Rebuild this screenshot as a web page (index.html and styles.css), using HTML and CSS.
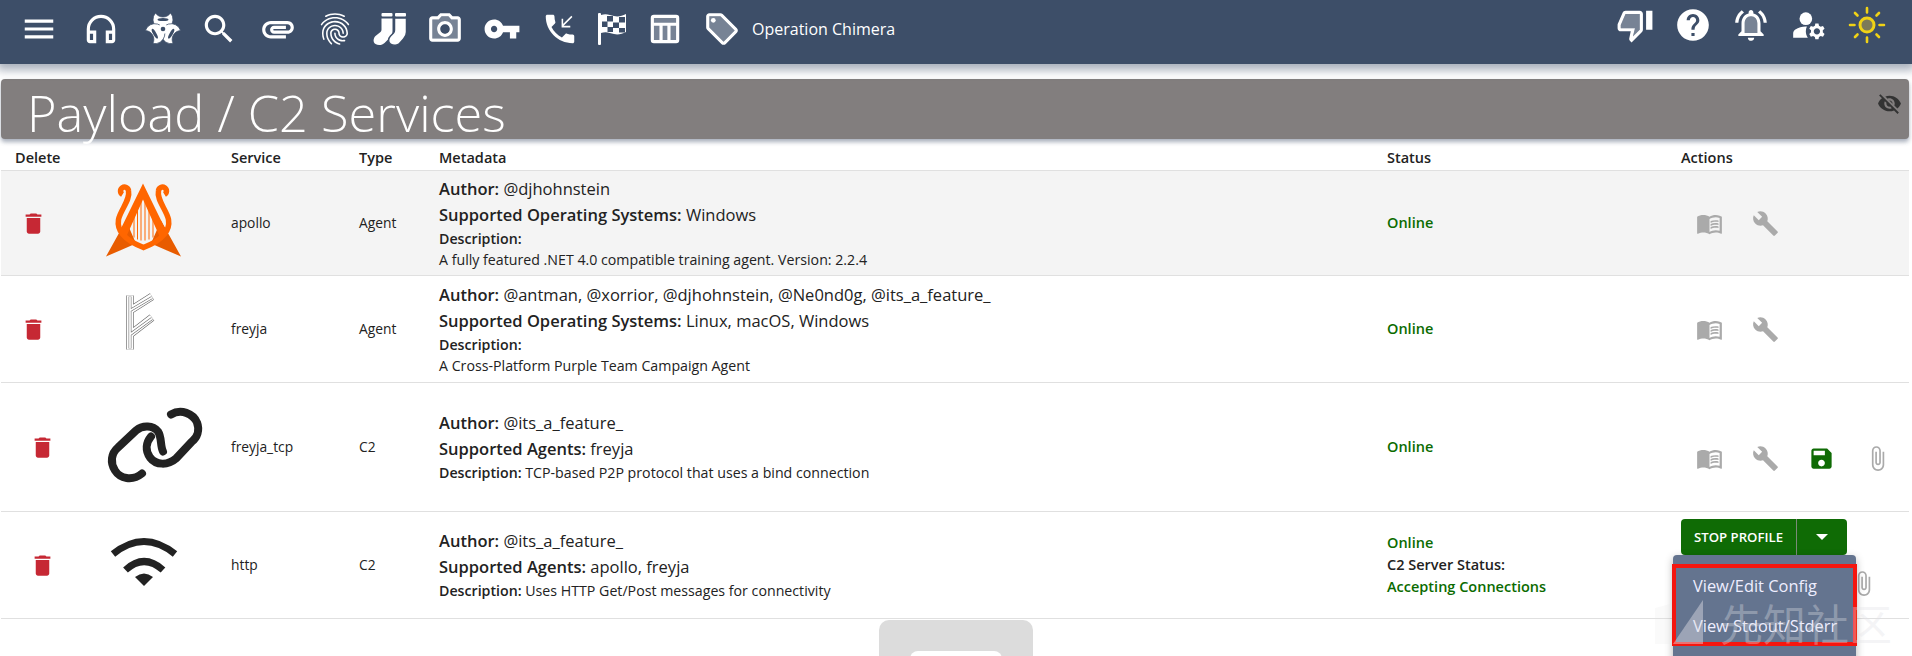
FILE: index.html
```html
<!DOCTYPE html>
<html lang="en">
<head>
    <meta charset="UTF-8">
    <title>Payload / C2 Services</title>
    <link rel="stylesheet" href="styles.css">
</head>
<body>
    <!-- Top bar -->
    <header class="appbar">
        <nav class="appbar-left">
            <svg class="nav-icon" viewBox="0 0 24 24"><path d="M3 18h18v-2H3v2zm0-5h18v-2H3v2zm0-7v2h18V6H3z"/></svg>
            <svg class="nav-icon" viewBox="0 0 24 24"><path d="M12 3a9 9 0 0 0-9 9v7c0 1.1.9 2 2 2h4v-8H5v-1a7 7 0 0 1 14 0v1h-4v8h4c1.1 0 2-.9 2-2v-7a9 9 0 0 0-9-9zM7 15v4H5v-4h2zm12 4h-2v-4h2v4z"/></svg>
            <svg class="nav-icon" viewBox="-19 -19 38 38">
                <g stroke="#3d4e68" stroke-width=".7">
                    <path d="M-7.5-16A10 10 0 1 0 7.5-16A9 9 0 0 1-7.5-16z"/>
                    <path d="M-7.5-16A10 10 0 1 0 7.5-16A9 9 0 0 1-7.5-16z" transform="rotate(120)"/>
                    <path d="M-7.5-16A10 10 0 1 0 7.5-16A9 9 0 0 1-7.5-16z" transform="rotate(240)"/>
                </g>
                <g fill="#3d4e68">
                    <ellipse cy="-9.5" rx="5.5" ry="1.6"/>
                    <ellipse cy="-9.5" rx="5.5" ry="1.6" transform="rotate(120)"/>
                    <ellipse cy="-9.5" rx="5.5" ry="1.6" transform="rotate(240)"/>
                </g>
                <circle r="5"/>
                <circle r="2.3" fill="#3d4e68"/>
            </svg>
            <svg class="nav-icon" viewBox="0 0 24 24"><path d="M15.5 14h-.79l-.28-.27C15.41 12.59 16 11.11 16 9.5 16 5.91 13.09 3 9.5 3S3 5.91 3 9.5 5.91 16 9.5 16c1.61 0 3.09-.59 4.23-1.57l.27.28v.79l5 4.99L20.49 19l-4.99-5zm-6 0C7.01 14 5 11.99 5 9.5S7.01 5 9.5 5 14 7.01 14 9.5 11.99 14 9.5 14z"/></svg>
            <svg class="nav-icon" viewBox="0 0 24 24"><path d="M2 12.5C2 9.46 4.46 7 7.5 7H18c2.21 0 4 1.79 4 4s-1.79 4-4 4H9.5C8.12 15 7 13.88 7 12.5S8.12 10 9.5 10H17v2H9.41c-.55 0-.55 1 0 1H18c1.1 0 2-.9 2-2s-.9-2-2-2H7.5C5.57 9 4 10.57 4 12.5S5.57 16 7.5 16H17v2H7.5C4.46 18 2 15.54 2 12.5z"/></svg>
            <svg class="nav-icon" viewBox="0 0 24 24"><path d="M17.81 4.47c-.08 0-.16-.02-.23-.06C15.66 3.42 14 3 12.01 3c-1.98 0-3.86.47-5.57 1.41-.24.13-.54.04-.68-.2-.13-.24-.04-.55.2-.68C7.82 2.52 9.86 2 12.01 2c2.13 0 3.99.47 6.03 1.52.25.13.34.43.21.67-.09.18-.26.28-.44.28zM3.5 9.72c-.1 0-.2-.03-.29-.09-.23-.16-.28-.47-.12-.7.99-1.4 2.25-2.5 3.75-3.27C9.98 4.04 14 4.03 17.15 5.65c1.5.77 2.76 1.86 3.75 3.25.16.22.11.54-.12.7-.23.16-.54.11-.7-.12-.9-1.26-2.04-2.25-3.39-2.94-2.87-1.47-6.54-1.47-9.4.01-1.36.7-2.5 1.7-3.4 2.96-.08.14-.23.21-.39.21zm6.25 12.07c-.13 0-.26-.05-.35-.15-.87-.87-1.34-1.43-2.01-2.64-.69-1.23-1.05-2.73-1.05-4.34 0-2.97 2.54-5.39 5.66-5.39s5.66 2.42 5.66 5.39c0 .28-.22.5-.5.5s-.5-.22-.5-.5c0-2.42-2.09-4.39-4.66-4.39-2.57 0-4.66 1.97-4.66 4.39 0 1.44.32 2.77.93 3.85.64 1.15 1.08 1.64 1.85 2.42.19.2.19.51 0 .71-.11.1-.24.15-.37.15zm7.17-1.85c-1.19 0-2.24-.3-3.1-.89-1.49-1.01-2.38-2.65-2.38-4.39 0-.28.22-.5.5-.5s.5.22.5.5c0 1.41.72 2.74 1.94 3.56.71.48 1.54.71 2.54.71.24 0 .64-.03 1.04-.1.27-.05.53.13.58.41.05.27-.13.53-.41.58-.57.11-1.07.12-1.21.12zM14.91 22c-.04 0-.09-.01-.13-.02-1.59-.44-2.63-1.03-3.72-2.1-1.4-1.39-2.17-3.24-2.17-5.22 0-1.62 1.38-2.94 3.08-2.94 1.7 0 3.08 1.32 3.08 2.94 0 1.07.93 1.94 2.08 1.94s2.08-.87 2.08-1.94c0-3.77-3.25-6.83-7.25-6.83-2.84 0-5.44 1.58-6.61 4.03-.39.81-.59 1.76-.59 2.8 0 .78.07 2.01.67 3.61.1.26-.03.55-.29.64-.26.1-.55-.04-.64-.29-.49-1.31-.73-2.61-.73-3.96 0-1.2.23-2.29.68-3.24 1.33-2.79 4.28-4.6 7.51-4.6 4.55 0 8.25 3.51 8.25 7.83 0 1.62-1.38 2.94-3.08 2.94s-3.08-1.32-3.08-2.94c0-1.07-.93-1.94-2.08-1.94s-2.08.87-2.08 1.94c0 1.71.66 3.31 1.87 4.51.95.94 1.86 1.46 3.27 1.85.27.07.42.35.35.61-.05.23-.26.38-.47.38z"/></svg>
            <svg class="nav-icon" viewBox="-2.5 -3 38 38">
                <rect x="8" y="0" width="11" height="3.5" rx="1"/>
                <rect x="21.5" y="0" width="11" height="3.5" rx="1"/>
                <path d="M8 5.5h11V18c0 3-1 5-3 7l-5 5c-2 2-6 3-9 1-3-2-2-6 0-8l5-4c1-1 1-2 1-3z"/>
                <path stroke="#3d4e68" stroke-width="1.5" d="M21 5h12v14c0 3-1 5-3 7l-4 4.5c-2 2-6 2.500-9 .5-3-2-2-6 0-8l3-3c1-1 1-2 1-3z"/>
            </svg>
            <svg class="nav-icon" viewBox="0 0 24 24"><path opacity=".3" d="M14.12 4H9.88L8.05 6H4v12h16V6h-4.05zM12 17c-2.76 0-5-2.24-5-5s2.24-5 5-5 5 2.24 5 5-2.24 5-5 5z"/><path d="M20 4h-3.17L15 2H9L7.17 4H4c-1.1 0-2 .9-2 2v12c0 1.1.9 2 2 2h16c1.1 0 2-.9 2-2V6c0-1.1-.9-2-2-2zm0 14H4V6h4.05l1.83-2h4.24l1.83 2H20v12z"/><path d="M12 7c-2.76 0-5 2.24-5 5s2.24 5 5 5 5-2.24 5-5-2.24-5-5-5zm0 8c-1.65 0-3-1.35-3-3s1.35-3 3-3 3 1.35 3 3-1.35 3-3 3z"/></svg>
            <svg class="nav-icon" viewBox="0 0 24 24"><path d="M12.65 10C11.83 7.67 9.61 6 7 6c-3.31 0-6 2.69-6 6s2.69 6 6 6c2.61 0 4.83-1.67 5.65-4H17v4h4v-4h2v-4H12.65zM7 14c-1.1 0-2-.9-2-2s.9-2 2-2 2 .9 2 2-.9 2-2 2z"/></svg>
            <svg class="nav-icon" viewBox="0 0 24 24"><path d="M20 15.5c-1.25 0-2.45-.2-3.57-.57-.35-.11-.74-.03-1.02.24l-2.2 2.2c-2.83-1.44-5.15-3.75-6.59-6.59l2.2-2.21c.28-.26.36-.65.25-1C8.7 6.45 8.5 5.25 8.5 4c0-.55-.45-1-1-1H4c-.55 0-1 .45-1 1 0 9.39 7.61 17 17 17 .55 0 1-.45 1-1v-3.5c0-.55-.45-1-1-1z"/><path d="M19.5 4L13.5 10M13.5 5.5V10.5H18.5" fill="none" stroke="#fff" stroke-width="1"/></svg>
            <svg class="nav-icon" viewBox="-5 -3 38 38">
                <rect x="0" y="0" width="3" height="32" rx="1"/>
                <path d="M3 2C8 0 12 2 16 3S24 3 28 1V19C24 21 20 22 16 21S8 18 3 20z"/>
                <g fill="#3d4e68">
                    <rect x="9" y="3" width="6" height="5.5"/>
                    <rect x="21" y="4" width="6" height="5.5"/>
                    <rect x="4" y="8.5" width="5.5" height="5.5"/>
                    <rect x="15" y="9.5" width="6" height="5.5"/>
                    <rect x="9.5" y="14" width="5.5" height="5"/>
                    <rect x="21" y="15" width="6" height="4.5"/>
                </g>
            </svg>
            <svg class="nav-icon" viewBox="0 0 24 24">
                <path opacity=".3" d="M4 4h16v16H4z"/>
                <path d="M5 3h14a2 2 0 0 1 2 2v14a2 2 0 0 1-2 2H5a2 2 0 0 1-2-2V5a2 2 0 0 1 2-2zm0 2v3h14V5H5zm0 5v9h3.5v-9H5zm5.5 0v9h3v-9h-3zm5 0v9H19v-9h-3.5z"/>
            </svg>
            <svg class="nav-icon" viewBox="0 0 24 24"><path opacity=".3" d="M11 4H4v7l9 9.01L20 13z"/><path d="M21.41 11.58l-9-9C12.05 2.22 11.55 2 11 2H4c-1.1 0-2 .9-2 2v7c0 .55.22 1.05.59 1.42l9 9c.36.36.86.58 1.41.58s1.05-.22 1.41-.59l7-7c.37-.36.59-.86.59-1.41s-.23-1.06-.59-1.42zM13 20.01L4 11V4h7v-.01l9 9-7 7.02z"/><circle cx="6.5" cy="6.5" r="1.5"/></svg>
            <span class="op-name">Operation Chimera</span>
        </nav>
        <div class="appbar-right">
            <svg class="nav-icon" viewBox="0 0 24 24"><path opacity=".3" d="M3 12v2h9l-1.34 5.34L15 15V5H6z"/><path d="M15 3H6c-.83 0-1.54.5-1.84 1.22l-3.02 7.05c-.09.23-.14.47-.14.73v2c0 1.1.9 2 2 2h6.31l-.95 4.57-.03.32c0 .41.17.79.44 1.06L9.83 23l6.59-6.59c.36-.36.58-.86.58-1.41V5c0-1.1-.9-2-2-2zm0 12l-4.34 4.34L12 14H3v-2l3-7h9v10zm4-12h4v12h-4z"/></svg>
            <svg class="nav-icon" viewBox="0 0 24 24"><path d="M12 2C6.48 2 2 6.48 2 12s4.48 10 10 10 10-4.48 10-10S17.52 2 12 2zm1 17h-2v-2h2v2zm2.07-7.75l-.9.92C13.45 12.9 13 13.5 13 15h-2v-.5c0-1.1.45-2.1 1.17-2.83l1.24-1.26c.37-.36.59-.86.59-1.41 0-1.1-.9-2-2-2s-2 .9-2 2H8c0-2.21 1.79-4 4-4s4 1.79 4 4c0 .88-.36 1.68-.93 2.25z"/></svg>
            <svg class="nav-icon" viewBox="0 0 24 24"><path opacity=".3" d="M12 6.5c-2.49 0-4 2.02-4 4.5v6h8v-6c0-2.48-1.51-4.5-4-4.5z"/><path d="M7.58 4.08L6.15 2.65C3.75 4.48 2.17 7.3 2.03 10.5h2c.15-2.65 1.51-4.97 3.55-6.42zm12.39 6.42h2c-.15-3.2-1.73-6.02-4.12-7.85l-1.42 1.43c2.02 1.45 3.39 3.77 3.54 6.42zM18 11c0-3.07-1.64-5.64-4.5-6.32V4c0-.83-.67-1.5-1.5-1.5s-1.5.67-1.5 1.5v.68C7.63 5.36 6 7.92 6 11v5l-2 2v1h16v-1l-2-2v-5zm-2 6H8v-6c0-2.48 1.51-4.5 4-4.5s4 2.02 4 4.5v6zm-4 5c.14 0 .27-.01.4-.04.65-.14 1.18-.58 1.44-1.18.1-.24.15-.5.15-.78h-4c.01 1.1.9 2 2.01 2z"/></svg>
            <svg class="nav-icon" viewBox="0 0 24 24"><circle cx="10" cy="8" r="4"/><path d="M10.67 13.02c-.22-.01-.44-.02-.67-.02-2.42 0-4.68.67-6.61 1.82-.88.52-1.39 1.5-1.39 2.53V20h9.26c-.79-1.13-1.26-2.51-1.26-4 0-1.07.25-2.07.67-2.98z"/><path d="M20.75 16c0-.22-.03-.42-.06-.63l1.14-1.01-1-1.73-1.45.49c-.32-.27-.68-.48-1.08-.63L18 11h-2l-.3 1.49c-.4.15-.76.36-1.08.63l-1.45-.49-1 1.73 1.14 1.01c-.03.21-.06.41-.06.63s.03.42.06.63l-1.14 1.01 1 1.73 1.45-.49c.32.27.68.48 1.08.63L16 21h2l.3-1.49c.4-.15.76-.36 1.08-.63l1.45.49 1-1.73-1.14-1.01c.03-.21.06-.41.06-.63zM17 18c-1.1 0-2-.9-2-2s.9-2 2-2 2 .9 2 2-.9 2-2 2z"/></svg>
            <svg class="nav-icon" viewBox="-19 -19 38 38">
                <circle r="7" fill="#7d7a58" stroke="#f0d216" stroke-width="3"/>
                <path d="M0-12.5v-4.5M0 12.5v4.5M-12.5 0h-4.5M12.5 0h4.5M-9.500-9.500l-2.500-2.500M9.500-9.500l2.500-2.500M-9.500 9.500l-2.500 2.500M9.500 9.500l2.500 2.500" fill="none" stroke="#f0d216" stroke-width="2.6" stroke-linecap="round"/>
            </svg>
        </div>
    </header>

    <div class="title-bar">
        <h1>Payload / C2 Services</h1>
        <svg class="hide-icon" viewBox="0 0 24 24"><path d="M12 7c2.76 0 5 2.24 5 5 0 .65-.13 1.26-.36 1.83l2.92 2.92c1.51-1.26 2.7-2.89 3.43-4.75-1.73-4.39-6-7.5-11-7.5-1.4 0-2.74.25-3.98.7l2.16 2.16C10.74 7.13 11.35 7 12 7zM2 4.27l2.28 2.28.46.46C3.08 8.3 1.78 10.02 1 12c1.73 4.39 6 7.5 11 7.5 1.55 0 3.03-.3 4.38-.84l.42.42L19.73 22 21 20.73 3.27 3 2 4.27zM7.53 9.8l1.55 1.55c-.05.21-.08.43-.08.65 0 1.66 1.34 3 3 3 .22 0 .44-.03.65-.08l1.55 1.55c-.67.33-1.41.53-2.2.53-2.76 0-5-2.24-5-5 0-.79.2-1.53.53-2.2zm4.31-.78l3.15 3.15.02-.16c0-1.66-1.34-3-3-3l-.17.01z"/></svg>
    </div>

    <!-- Services -->
    <table class="services">
        <colgroup>
            <col class="col-delete"><col class="col-logo"><col class="col-service"><col class="col-type"><col class="col-meta"><col class="col-status"><col class="col-actions">
        </colgroup>
        <thead>
            <tr>
                <th>Delete</th>
                <th></th>
                <th>Service</th>
                <th>Type</th>
                <th>Metadata</th>
                <th>Status</th>
                <th>Actions</th>
            </tr>
        </thead>
        <tbody>
            <tr class="row-agent shaded">
                <td class="delete"><svg class="trash" viewBox="0 0 24 24"><path d="M6 19c0 1.1.9 2 2 2h8c1.1 0 2-.9 2-2V7H6v12zM19 4h-3.5l-1-1h-5l-1 1H5v2h14V4z"/></svg></td>
                <td class="logo">
                    <svg viewBox="93 173.5 100 100">
                        <path fill="#e85c00" d="M106 257L126 221 136 244 120 251zM181 257L161 221 151 244 167 251z"/>
                        <path fill="#ff6600" d="M143 184L119 233 125 240 143 200 161 240 167 233z"/>
                        <path d="M134 212V238M137.5 206V240M141 200V241M145 200V241M149 206V240M153 212V238" stroke="#ff6600" stroke-width="1" fill="none"/>
                        <path d="M122.5 195a4 4 0 1 1 6-4c2 10-8 19-10 29-2 12 7 21 25 28 18-7 27-16 25-28-2-10-12-19-10-29a4 4 0 1 1 6 4" stroke="#ff6600" stroke-width="5.5" fill="none"/>
                    </svg>
                </td>
                <td class="plain">apollo</td>
                <td class="plain">Agent</td>
                <td class="meta">
                    <p class="meta-big"><b>Author:</b> @djhohnstein</p>
                    <p class="meta-big"><b>Supported Operating Systems:</b> Windows</p>
                    <p class="meta-small"><b>Description:</b></p>
                    <p class="meta-small">A fully featured .NET 4.0 compatible training agent. Version: 2.2.4</p>
                </td>
                <td class="plain online">Online</td>
                <td>
                    <div class="actions">
                        <span class="action"><svg viewBox="0 0 24 24"><path d="M21 5c-1.11-.35-2.33-.5-3.5-.5-1.95 0-4.05.4-5.5 1.5-1.45-1.1-3.55-1.5-5.5-1.5S2.45 4.9 1 6v14.65c0 .25.25.5.5.5.1 0 .15-.05.25-.05C3.1 20.45 5.05 20 6.5 20c1.95 0 4.05.4 5.5 1.5 1.35-.85 3.8-1.5 5.5-1.5 1.65 0 3.35.3 4.75 1.05.1.05.15.05.25.05.25 0 .5-.25.5-.5V6c-.6-.45-1.25-.75-2-1zm0 13.5c-1.1-.35-2.3-.5-3.5-.5-1.7 0-4.15.65-5.5 1.5V8c1.35-.85 3.8-1.5 5.5-1.5 1.2 0 2.4.15 3.5.5v11.5z"/><path d="M17.5 10.5c.88 0 1.73.09 2.5.26V9.24c-.79-.15-1.64-.24-2.5-.24-1.7 0-3.24.29-4.5.83v1.66c1.13-.64 2.7-.99 4.5-.99zM13 12.49v1.66c1.13-.64 2.7-.99 4.5-.99.88 0 1.73.09 2.5.26V11.9c-.79-.15-1.64-.24-2.5-.24-1.7 0-3.24.3-4.5.83zM17.5 14.33c-1.7 0-3.24.29-4.5.83v1.66c1.13-.64 2.7-.99 4.5-.99.88 0 1.73.09 2.5.26v-1.52c-.79-.16-1.64-.24-2.5-.24z"/></svg></span>
                        <span class="action"><svg viewBox="0 0 24 24"><path d="M22.7 19l-9.1-9.1c.9-2.3.4-5-1.5-6.9-2-2-5-2.4-7.4-1.3L9 6 6 9 1.6 4.7C.4 7.1.9 10.1 2.9 12.1c1.9 1.9 4.6 2.4 6.9 1.5l9.1 9.1c.4.4 1 .4 1.4 0l2.3-2.3c.5-.4.5-1.1.1-1.4z"/></svg></span>
                    </div>
                </td>
            </tr>
            <tr class="row-agent">
                <td class="delete"><svg class="trash" viewBox="0 0 24 24"><path d="M6 19c0 1.1.9 2 2 2h8c1.1 0 2-.9 2-2V7H6v12zM19 4h-3.5l-1-1h-5l-1 1H5v2h14V4z"/></svg></td>
                <td class="logo">
                    <svg viewBox="93 279.5 100 100">
                        <g fill="none">
                            <path d="M130 296V350M130 311L152 297M130 335L152 318" stroke="#666" stroke-width="7.5"/>
                            <path d="M130 296V350M130 311L152 297M130 335L152 318" stroke="#fff" stroke-width="6.3"/>
                            <path d="M130 297V349M130 311L152 298M130 335L152 319" stroke="#666" stroke-width="2.8"/>
                            <path d="M130 297V349M130 311L152 298M130 335L152 319" stroke="#fff" stroke-width="1.7"/>
                        </g>
                    </svg>
                </td>
                <td class="plain">freyja</td>
                <td class="plain">Agent</td>
                <td class="meta">
                    <p class="meta-big"><b>Author:</b> @antman, @xorrior, @djhohnstein, @Ne0nd0g, @its_a_feature_</p>
                    <p class="meta-big"><b>Supported Operating Systems:</b> Linux, macOS, Windows</p>
                    <p class="meta-small"><b>Description:</b></p>
                    <p class="meta-small">A Cross-Platform Purple Team Campaign Agent</p>
                </td>
                <td class="plain online">Online</td>
                <td>
                    <div class="actions">
                        <span class="action"><svg viewBox="0 0 24 24"><path d="M21 5c-1.11-.35-2.33-.5-3.5-.5-1.95 0-4.05.4-5.5 1.5-1.45-1.1-3.55-1.5-5.5-1.5S2.45 4.9 1 6v14.65c0 .25.25.5.5.5.1 0 .15-.05.25-.05C3.1 20.45 5.05 20 6.5 20c1.95 0 4.05.4 5.5 1.5 1.35-.85 3.8-1.5 5.5-1.5 1.65 0 3.35.3 4.75 1.05.1.05.15.05.25.05.25 0 .5-.25.5-.5V6c-.6-.45-1.25-.75-2-1zm0 13.5c-1.1-.35-2.3-.5-3.5-.5-1.7 0-4.15.65-5.5 1.5V8c1.35-.85 3.8-1.5 5.5-1.5 1.2 0 2.4.15 3.5.5v11.5z"/><path d="M17.5 10.5c.88 0 1.73.09 2.5.26V9.24c-.79-.15-1.64-.24-2.5-.24-1.7 0-3.24.29-4.5.83v1.66c1.13-.64 2.7-.99 4.5-.99zM13 12.49v1.66c1.13-.64 2.7-.99 4.5-.99.88 0 1.73.09 2.5.26V11.9c-.79-.15-1.64-.24-2.5-.24-1.7 0-3.24.3-4.5.83zM17.5 14.33c-1.7 0-3.24.29-4.5.83v1.66c1.13-.64 2.7-.99 4.5-.99.88 0 1.73.09 2.5.26v-1.52c-.79-.16-1.64-.24-2.5-.24z"/></svg></span>
                        <span class="action"><svg viewBox="0 0 24 24"><path d="M22.7 19l-9.1-9.1c.9-2.3.4-5-1.5-6.9-2-2-5-2.4-7.4-1.3L9 6 6 9 1.6 4.7C.4 7.1.9 10.1 2.9 12.1c1.9 1.9 4.6 2.4 6.9 1.5l9.1 9.1c.4.4 1 .4 1.4 0l2.3-2.3c.5-.4.5-1.1.1-1.4z"/></svg></span>
                    </div>
                </td>
            </tr>
            <tr class="row-tcp">
                <td class="delete delete-c2"><svg class="trash" viewBox="0 0 24 24"><path d="M6 19c0 1.1.9 2 2 2h8c1.1 0 2-.9 2-2V7H6v12zM19 4h-3.5l-1-1h-5l-1 1H5v2h14V4z"/></svg></td>
                <td class="logo">
                    <svg viewBox="93 395.5 100 100">
                        <g fill="none" stroke="#222" stroke-width="8" stroke-linecap="round">
                            <path d="M171 413C181 407 193 412 197 421C200 429 197 436 192 440L176 457C168 464 156 464 150 456C145 449 146 441 151 435"/>
                            <path d="M142 472C132 480 120 477 115 469C110 461 111 452 118 446L136 429C143 423 153 424 158 430C162 436 160 444 163 450"/>
                        </g>
                    </svg>
                </td>
                <td class="plain">freyja_tcp</td>
                <td class="plain">C2</td>
                <td class="meta">
                    <p class="meta-big"><b>Author:</b> @its_a_feature_</p>
                    <p class="meta-big"><b>Supported Agents:</b> freyja</p>
                    <p class="meta-small"><b>Description:</b> TCP-based P2P protocol that uses a bind connection</p>
                </td>
                <td class="plain online">Online</td>
                <td>
                    <div class="actions actions-low">
                        <span class="action"><svg viewBox="0 0 24 24"><path d="M21 5c-1.11-.35-2.33-.5-3.5-.5-1.95 0-4.05.4-5.5 1.5-1.45-1.1-3.55-1.5-5.5-1.5S2.45 4.9 1 6v14.65c0 .25.25.5.5.5.1 0 .15-.05.25-.05C3.1 20.45 5.05 20 6.5 20c1.95 0 4.05.4 5.5 1.5 1.35-.85 3.8-1.5 5.5-1.5 1.65 0 3.35.3 4.75 1.05.1.05.15.05.25.05.25 0 .5-.25.5-.5V6c-.6-.45-1.25-.75-2-1zm0 13.5c-1.1-.35-2.3-.5-3.5-.5-1.7 0-4.15.65-5.5 1.5V8c1.35-.85 3.8-1.5 5.5-1.5 1.2 0 2.4.15 3.5.5v11.5z"/><path d="M17.5 10.5c.88 0 1.73.09 2.5.26V9.24c-.79-.15-1.64-.24-2.5-.24-1.7 0-3.24.29-4.5.83v1.66c1.13-.64 2.7-.99 4.5-.99zM13 12.49v1.66c1.13-.64 2.7-.99 4.5-.99.88 0 1.73.09 2.5.26V11.9c-.79-.15-1.64-.24-2.5-.24-1.7 0-3.24.3-4.5.83zM17.5 14.33c-1.7 0-3.24.29-4.5.83v1.66c1.13-.64 2.7-.99 4.5-.99.88 0 1.73.09 2.5.26v-1.52c-.79-.16-1.64-.24-2.5-.24z"/></svg></span>
                        <span class="action"><svg viewBox="0 0 24 24"><path d="M22.7 19l-9.1-9.1c.9-2.3.4-5-1.5-6.9-2-2-5-2.4-7.4-1.3L9 6 6 9 1.6 4.7C.4 7.1.9 10.1 2.9 12.1c1.9 1.9 4.6 2.4 6.9 1.5l9.1 9.1c.4.4 1 .4 1.4 0l2.3-2.3c.5-.4.5-1.1.1-1.4z"/></svg></span>
                        <span class="action action-save"><svg viewBox="0 0 24 24"><path d="M17 3H5c-1.11 0-2 .9-2 2v14c0 1.1.89 2 2 2h14c1.1 0 2-.9 2-2V7l-4-4zm-5 16c-1.66 0-3-1.34-3-3s1.34-3 3-3 3 1.34 3 3-1.34 3-3 3zm3-10H5V5h10v4z"/></svg></span>
                        <span class="action"><svg viewBox="0 0 24 24"><path d="M16.5 6v11.5c0 2.21-1.79 4-4 4s-4-1.79-4-4V5c0-1.38 1.12-2.5 2.5-2.5s2.5 1.12 2.5 2.5v10.5c0 .55-.45 1-1 1s-1-.45-1-1V6H10v9.5c0 1.38 1.12 2.5 2.5 2.5s2.5-1.12 2.5-2.5V5c0-2.21-1.79-4-4-4S7 2.79 7 5v12.5c0 3.04 2.46 5.5 5.5 5.5s5.5-2.46 5.5-5.5V6h-1.5z"/></svg></span>
                    </div>
                </td>
            </tr>
            <tr class="row-http">
                <td class="delete delete-c2"><svg class="trash" viewBox="0 0 24 24"><path d="M6 19c0 1.1.9 2 2 2h8c1.1 0 2-.9 2-2V7H6v12zM19 4h-3.5l-1-1h-5l-1 1H5v2h14V4z"/></svg></td>
                <td class="logo">
                    <svg viewBox="93 516 100 100">
                        <g fill="none" stroke="#222" stroke-width="7">
                            <path d="M113 555Q144 530 175 555"/>
                            <path d="M125.5 571Q144 554 163 571"/>
                        </g>
                        <path fill="#222" d="M135 578Q144 571 153 578L144 587z"/>
                    </svg>
                </td>
                <td class="plain">http</td>
                <td class="plain">C2</td>
                <td class="meta">
                    <p class="meta-big"><b>Author:</b> @its_a_feature_</p>
                    <p class="meta-big"><b>Supported Agents:</b> apollo, freyja</p>
                    <p class="meta-small"><b>Description:</b> Uses HTTP Get/Post messages for connectivity</p>
                </td>
                <td class="status-stack">
                    <p class="online">Online</p>
                    <p><b>C2 Server Status:</b></p>
                    <p class="online">Accepting Connections</p>
                </td>
                <td class="http-actions">
                    <div class="split-wrap">
                        <div class="split-btn">
                            <span class="split-label">STOP PROFILE</span>
                            <span class="split-arrow"><i class="caret"></i></span>
                        </div>
                        <!-- Opened dropdown of the split button -->
                        <div class="menu">
                            <div class="menu-list">
                                <div class="menu-item">View/Edit Config</div>
                                <div class="menu-item">View Stdout/Stderr</div>
                            </div>
                        </div>
                    </div>
                    <div class="actions actions-end">
                        <span class="action"><svg viewBox="0 0 24 24"><path d="M16.5 6v11.5c0 2.21-1.79 4-4 4s-4-1.79-4-4V5c0-1.38 1.12-2.5 2.5-2.5s2.5 1.12 2.5 2.5v10.5c0 .55-.45 1-1 1s-1-.45-1-1V6H10v9.5c0 1.38 1.12 2.5 2.5 2.5s2.5-1.12 2.5-2.5V5c0-2.21-1.79-4-4-4S7 2.79 7 5v12.5c0 3.04 2.46 5.5 5.5 5.5s5.5-2.46 5.5-5.5V6h-1.5z"/></svg></span>
                    </div>
                </td>
            </tr>
        </tbody>
    </table>

    <div class="placeholder"><div class="placeholder-inner"></div></div>

    <!-- Site watermark -->
    <div class="watermark">
        <svg viewBox="0 0 48 44">
            <path class="mark-dim" d="M0 8L15 4V44H0z"/>
            <path d="M18 44L48 0V44z"/>
        </svg>
        <span>先知社区</span>
    </div>
</body>
</html>
```

FILE: styles.css
```css
body {
    margin: 0;
    height: 656px;
    overflow: hidden;
    position: relative;
    background: #fff;
    font-family: "Open Sans", "Noto Sans", sans-serif;
    color: #222;
}

/* top bar */
.appbar {
    height: 64px;
    display: flex;
    justify-content: space-between;
    background: #3d4e68;
    box-shadow: 0 3px 9px 3px rgba(61, 78, 104, 0.45);
    position: relative;
}
.appbar-left {
    display: flex;
    align-items: center;
    padding: 0 0 6px 20px;
}
.appbar-right {
    display: flex;
    align-items: center;
    gap: 20px;
    padding: 0 26px 14px 0;
}
.nav-icon {
    width: 38px;
    height: 38px;
    flex: none;
    fill: #fff;
}
/* icons in the real bar have uneven widths, so the gaps differ */
.appbar-left .nav-icon { margin-left: 19px; }
.appbar-left .nav-icon:nth-child(1) { margin-left: 0; }
.appbar-left .nav-icon:nth-child(2),
.appbar-left .nav-icon:nth-child(3) { margin-left: 24px; }
.appbar-left .nav-icon:nth-child(4) { margin-left: 18px; }
.appbar-left .nav-icon:nth-child(5) { margin-left: 21px; }
.appbar-left .nav-icon:nth-child(7),
.appbar-left .nav-icon:nth-child(8) { margin-left: 17px; }
.appbar-left .nav-icon:nth-child(10) { margin-left: 20px; }
.appbar-left .nav-icon:nth-child(11) { margin-left: 14px; }
.appbar-left .nav-icon:nth-child(12) { margin-left: 15px; }
.op-name {
    margin-left: 11px;
    color: #fff;
    font-size: 16px;
    line-height: 20px;
}

/* page title */
.title-bar {
    height: 60px;
    margin: 15px 3px 0 1px;
    display: flex;
    justify-content: space-between;
    background: #827e7e;
    border-radius: 4px;
    box-shadow: 0 3px 4px rgba(61, 78, 104, 0.45);
}
.title-bar h1 {
    margin: 0;
    padding-left: 26px;
    font-size: 50.5px;
    font-weight: 300;
    line-height: 68px;
    height: 60px;
    color: #fff;
    white-space: nowrap;
}
.hide-icon {
    width: 25px;
    height: 25px;
    margin: 12px 7px 0 0;
    fill: #333;
}

/* services table */
.services {
    width: 1908px;
    margin: 6px 0 0 1px;
    border-collapse: collapse;
    table-layout: fixed;
    font-size: 13.8px;
}
.col-delete { width: 74px; }
.col-logo { width: 142px; }
.col-service { width: 128px; }
.col-type { width: 80px; }
.col-meta { width: 948px; }
.col-status { width: 294px; }
.col-actions { width: 242px; }

.services th {
    height: 25px;
    padding: 0 0 0 14px;
    text-align: left;
    font-size: 14.5px;
    font-weight: 600;
    border-bottom: 1px solid #e0e0e0;
}
.services td {
    padding: 0 0 0 14px;
    border-bottom: 1px solid #e0e0e0;
}
.row-agent td { height: 106px; }
.row-tcp td { height: 128px; }
.row-http td { height: 106px; }
.shaded td { height: 104px; }
.shaded { background: #f4f4f4; }

/* one line cells sit a pixel above the middle of the row */
.services td.plain {
    height: auto;
    padding-bottom: 2px;
}

.services td.delete { padding-left: 19px; }
.services td.delete-c2 { padding-left: 28px; }
.trash {
    display: block;
    width: 27px;
    height: 27px;
    fill: #c62834;
}
.services td.logo { padding: 0 6px 0 0; }
.logo svg {
    display: block;
    width: 100px;
    height: 100px;
    margin: 0 auto;
    overflow: visible;
}

.meta p { margin: 0; }
.meta b { font-weight: 600; }
.meta-big {
    font-size: 16.5px;
    line-height: 26px;
}
.meta-small {
    font-size: 14.2px;
    line-height: 21.5px;
}

.online {
    color: #0b6b00;
    font-weight: 600;
    font-size: 14.5px;
}
.status-stack p {
    margin: 0;
    font-size: 14.5px;
    line-height: 22px;
}
.status-stack b { font-weight: 600; }

/* action buttons */
.actions { display: flex; }
.actions-low { padding-top: 22px; }
.actions-end {
    justify-content: flex-end;
    padding-right: 18px;
}
.action {
    width: 56px;
    height: 56px;
    display: flex;
    align-items: center;
    justify-content: center;
    fill: #aaa;
}
.action svg {
    width: 27px;
    height: 27px;
}
.action-save { fill: #0f6b05; }

.http-actions { vertical-align: top; }
.split-wrap {
    position: relative;
    padding-top: 7px;
    width: 166px;
}
.split-btn {
    display: flex;
    height: 36px;
    background: #0f6b05;
    border-radius: 4px;
    color: #fff;
    font-size: 13.2px;
    font-weight: 600;
    line-height: 36px;
}
.split-label {
    width: 115px;
    text-align: center;
    border-right: 1px solid #7a8a78;
}
.split-arrow {
    flex: 1;
    display: flex;
    align-items: center;
    justify-content: center;
}
.caret {
    border-left: 6px solid transparent;
    border-right: 6px solid transparent;
    border-top: 6px solid #fff;
}
.menu {
    position: absolute;
    top: 43px;
    left: -8px;
    width: 183px;
    height: 110px;
    padding-top: 9px;
    box-sizing: border-box;
    background: #64748f;
    border-radius: 4px;
    box-shadow: 0 3px 8px rgba(0, 0, 0, 0.3);
    z-index: 2;
}
.menu-list {
    margin: 0 -1px;
    border: 4px solid #f5160f;
}
.menu-item {
    height: 36px;
    padding-left: 17px;
    color: #eef;
    font-size: 16.4px;
    line-height: 36px;
}
.menu-item + .menu-item {
    padding-top: 2px;
    line-height: 40px;
}

/* cut off by the bottom of the window */
.placeholder {
    width: 154px;
    height: 60px;
    margin: 1px auto 0;
    padding-top: 31px;
    box-sizing: border-box;
    background: #dcdcdc;
    border-radius: 10px 10px 0 0;
}
.placeholder-inner {
    width: 92px;
    height: 29px;
    margin: 0 auto;
    background: #fff;
    border-radius: 8px 8px 0 0;
}

.watermark {
    position: absolute;
    left: 1655px;
    top: 600px;
    display: flex;
    align-items: center;
    gap: 17px;
    color: rgba(225, 225, 230, 0.35);
    font-family: "Noto Sans CJK SC", sans-serif;
    font-size: 43px;
    line-height: 44px;
    z-index: 3;
}
.watermark svg {
    width: 48px;
    height: 44px;
    fill: rgba(225, 225, 230, 0.45);
}
.mark-dim { opacity: 0.4; }
```
